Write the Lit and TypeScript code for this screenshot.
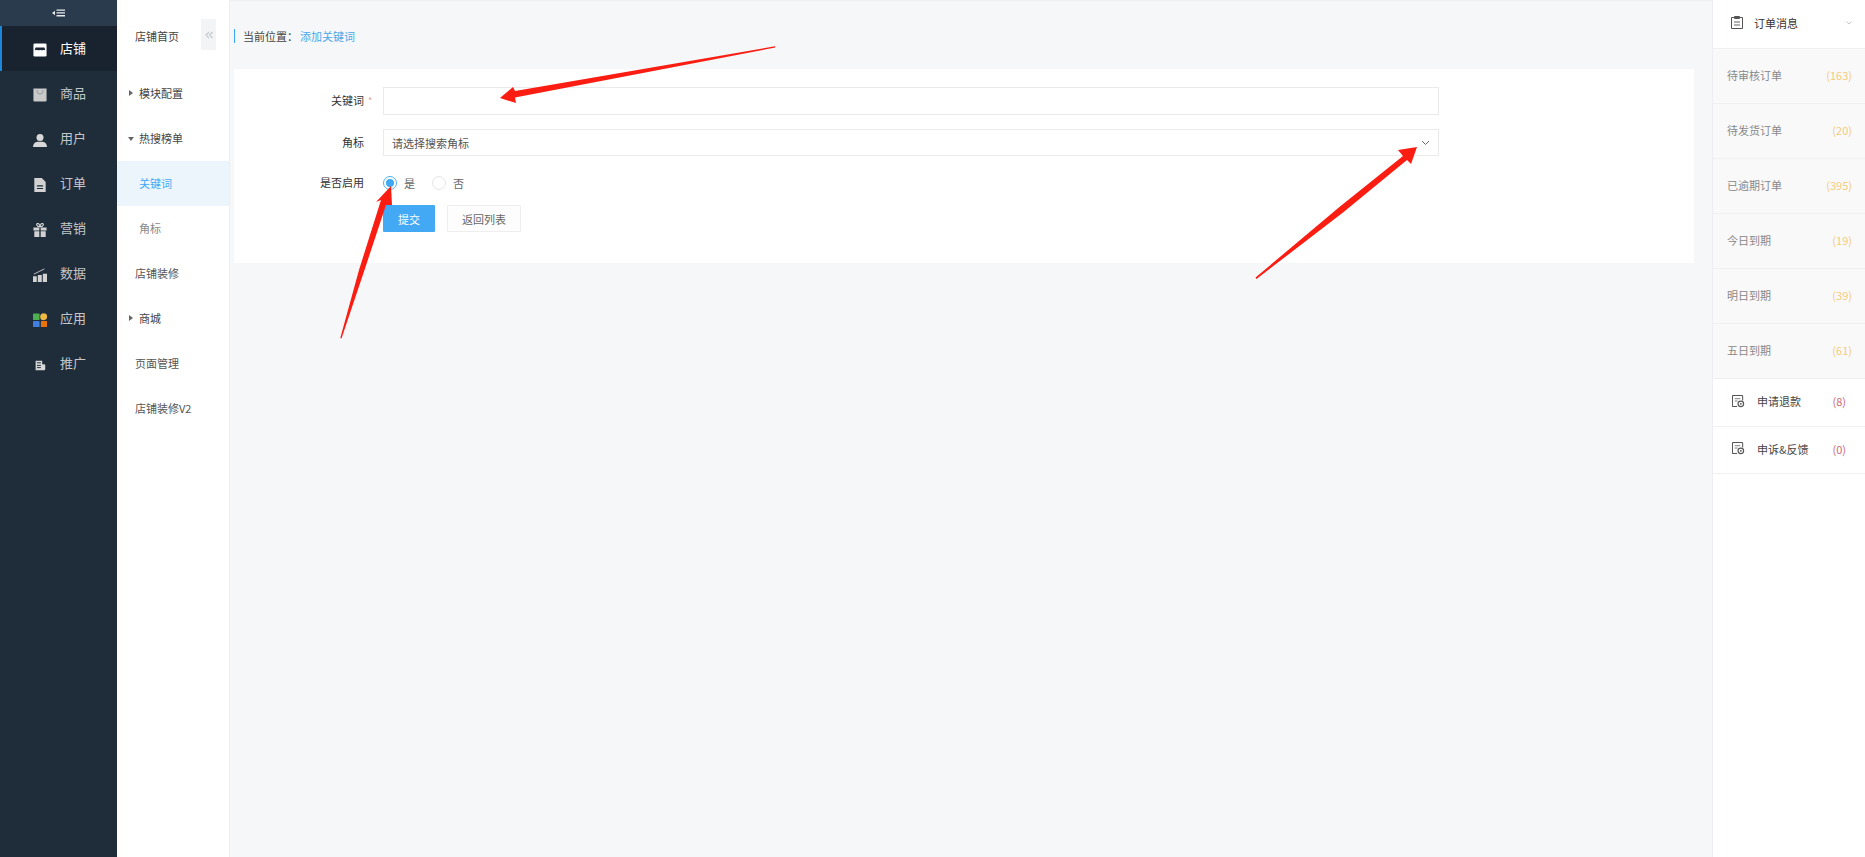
import { LitElement, html, css, svg } from "lit";
import { customElement } from "lit/decorators.js";

const icons: Record<string, unknown> = {
  shop: svg`<path fill="#fff" d="M1.500 3Q1.500 1.500 3 1.500h12Q16.500 1.500 16.500 3V15q0 1.500-1.500 1.500H3Q1.500 16.500 1.500 15z"/><path fill="#1a2433" d="M4 6h10l1 2.500q-1 1.200-2 .2-1.800 1.200-3.800 0-2 1.200-3.600 0-1.600 1-2.600-.2z"/>`,
  goods: svg`<path fill="#c9c9c9" d="M1.500 1.500h15V15q0 1.500-1.500 1.500H3Q1.500 16.500 1.500 15z"/><path fill="none" stroke="#8f9499" stroke-width="1" d="M5.500 3.500q0 4.500 3.500 4.500t3.500-4.500"/>`,
  user: svg`<circle cx="9" cy="6" r="4" fill="#d8d8d8"/><path fill="#d8d8d8" d="M1 17q.5-5.500 5-6h6q4.500.5 5 6z"/>`,
  order: svg`<path fill="#d2d2d2" d="M2.500 1h8.500l4.500 4.500V17h-13z"/><path stroke="#1f2d3b" stroke-width="1.300" d="M5.500 10h7M5.500 13h7"/>`,
  gift: svg`<path fill="#d2d2d2" d="M1.500 6h6.700v3.500H1.500zM9.800 6h6.700v3.500H9.800zM2.500 10.500h5.700V17H2.500zM9.800 10.500h5.700V17H9.800z"/><path fill="none" stroke="#d2d2d2" stroke-width="1.300" d="M9 5.500C5 5 4.500 2 6 1.500S9 3.500 9 5.500C9 3.500 10.500 1 12 1.500S13 5 9 5.500z"/>`,
  data: svg`<path fill="#d2d2d2" d="M1 10.500h4.300v6.500H1zM6.500 9H11v8H6.500zM12.200 7.500H17V17h-4.800z"/><path fill="none" stroke="#d2d2d2" stroke-width="1" d="M2 8 8 5l6-3"/>`,
  app: svg`<rect x="1" y="1.500" width="7.500" height="7.500" rx="1" fill="#4caf50"/><circle cx="13.200" cy="5.200" r="4" fill="#f0b840"/><rect x="1" y="10" width="7.500" height="7.500" rx="1" fill="#3f7fe0"/><rect x="10" y="10" width="7.500" height="7.500" rx="1" fill="#e8730c"/>`,
  promo: svg`<path fill="#d8d8d8" d="M4 4h7.500v4H14l1 1v5l-1 1H4z"/><path stroke="#1f2d3b" stroke-width="1.100" d="M5.500 6.500h4.500M5.500 9.500h4.500M5.500 12h4.500"/>`,
};

const mainNav = [
  ["shop", "店铺", true],
  ["goods", "商品", false],
  ["user", "用户", false],
  ["order", "订单", false],
  ["gift", "营销", false],
  ["data", "数据", false],
  ["app", "应用", false],
  ["promo", "推广", false],
] as const;

const subNav = [
  { t: "模块配置", k: "group", arrow: "tr" },
  { t: "热搜榜单", k: "group", arrow: "td" },
  { t: "关键词", k: "child active" },
  { t: "角标", k: "child" },
  { t: "店铺装修", k: "top" },
  { t: "商城", k: "group", arrow: "tr" },
  { t: "页面管理", k: "top" },
  { t: "店铺装修V2", k: "top" },
];

const orders = [
  ["待审核订单", "(163)"],
  ["待发货订单", "(20)"],
  ["已逾期订单", "(395)"],
  ["今日到期", "(19)"],
  ["明日到期", "(39)"],
  ["五日到期", "(61)"],
];

const docIcon = svg`<svg class="ri" viewBox="0 0 14 14" width="13" height="13"><path fill="none" stroke="#555" stroke-width="1.100" d="M11.500 6V1.500q0-1-1-1h-9q-1 0-1 1v10q0 1 1 1h4"/><path stroke="#777" stroke-width="1" d="M3 4h6M3 6.500h3"/><circle cx="9.500" cy="9.500" r="3" fill="none" stroke="#555" stroke-width="1.300"/><circle cx="9.500" cy="9.500" r="1" fill="#555"/></svg>`;

@customElement("app-root")
export class AppRoot extends LitElement {
  static styles = css`
    :host { display: block; height: 857px; width: 1865px; position: relative; overflow: hidden;
      font-family: "Noto Sans CJK SC", "Liberation Sans", sans-serif; font-size: 11px; color: #333; background: #f5f7f9; }
    .page { display: flex; height: 100%; }
    .side { width: 117px; flex: none; background: #1f2d3b; color: #cfd2d5; }
    .fold { height: 26px; background: #2a3b4d; display: flex; align-items: center; justify-content: center; }
    .nav { height: 45px; display: flex; align-items: center; padding-left: 33px; gap: 13px; font-size: 13px; color: #c4c7ca; }
    .nav.on { background: #19222f; color: #fff; box-shadow: inset 2px 0 0 #1c87d9; }
    .nav svg { width: 14px; height: 14px; flex: none; margin-top: 2px; }
    .nav span { margin-top: -2px; }
    .sub { flex: none; background: #fff; border-right: 1px solid #eceef1; box-sizing: border-box; width: 113px; position: relative; }
    .si { height: 45px; box-sizing: border-box; padding-bottom: 2px; display: flex; align-items: center; color: #555; position: relative; }
    .si.top { padding-left: 18px; }
    .si.group { padding-left: 22px; color: #444; }
    .si.child { padding-left: 22px; color: #888; }
    .si.active { color: #3ea9f5; background: #edf5fc; }
    .si.home { padding: 0 0 0 18px; color: #444; height: 71px; }
    .tri { position: absolute; left: 11px; top: 50%; width: 0; height: 0; }
    .tri.tr { border-left: 4px solid #666; border-top: 3.500px solid transparent; border-bottom: 3.500px solid transparent; margin-left: 1px; margin-top: -4px; }
    .tri.td { border-top: 4px solid #666; border-left: 3.500px solid transparent; border-right: 3.500px solid transparent; margin-top: -2px; }
    .coll { position: absolute; left: 84px; top: 19px; width: 15px; height: 31px; background: #f3f4f6; color: #c3c7cc; display: flex; align-items: center; justify-content: center; }
    .main { flex: 1; min-width: 0; padding: 0 18px 0 4px; display: flex; flex-direction: column; border-top: 1px solid #eff0f2; }
    .crumb { height: 68px; flex: none; display: flex; align-items: center; color: #444; }
    .crumb .in { display: flex; align-items: center; height: 14px; border-left: 1px solid #3ea9f5; padding-left: 8px; margin-top: 2px; }
    .crumb a { color: #4ba6ea; margin-left: 2px; }
    .card { background: #fff; height: 194px; flex: none; box-sizing: border-box; padding-top: 18px; }
    .row { display: flex; align-items: center; }
    .lab { width: 130px; flex: none; text-align: right; color: #333; box-sizing: border-box; position: relative; padding-bottom: 2px; }
    .field { width: 1056px; margin-left: 19px; height: 28px; border: 1px solid #eaeaec; box-sizing: border-box; display: flex; align-items: center; justify-content: space-between; padding: 0 8px 0 8px; color: #555; }
    .field.sel { height: 27px; }
    .star { position: absolute; left: 134px; top: 2px; color: #e59a9a; font-size: 9px; }
    .r2 { margin-top: 14px; }
    .r3 { margin-top: 13px; height: 28px; }
    .radio { width: 14px; height: 14px; border-radius: 50%; border: 1px solid #e3e5e8; box-sizing: border-box; flex: none; }
    .radio.on { border-color: #4fb0f6; position: relative; }
    .radio.on::after { content: ""; position: absolute; inset: 2px; border-radius: 50%; background: #3ea9f5; }
    .radios { margin-left: 19px; display: flex; align-items: center; color: #666; }
    .radios span { margin-left: 7px; margin-right: 17px; }
    .btns { display: flex; gap: 12px; margin: 8px 0 0 149px; }
    .btn { height: 27px; box-sizing: border-box; display: flex; align-items: center; justify-content: center; border-radius: 1px; }
    .btn.pri { width: 52px; background: #43a9f5; color: #fff; }
    .btn.def { width: 74px; border: 1px solid #eeeeee; color: #666; background: #fdfdfd; }
    .panel { width: 153px; flex: none; background: #fff; border-left: 1px solid #eceef1; box-sizing: border-box; }
    .rh { height: 49px; display: flex; align-items: center; padding: 0 0 3px 18px; color: #333; border-bottom: 1px solid #eff0f2; box-sizing: border-box; }
    .rh svg.doc { margin-right: 11px; }
    .rh svg.ch { margin-left: 48px; }
    .ro { height: 55px; box-sizing: border-box; display: flex; align-items: center; justify-content: space-between; padding: 0 13px 2px 14px; background: #f9f9fa; border-bottom: 1px solid #eff0f2; color: #888; }
    .ro b { font-weight: 400; color: #f3cb7a; }
    .rr { height: 48px; box-sizing: border-box; display: flex; align-items: center; padding: 0 0 3px 19px; border-bottom: 1px solid #eff0f2; color: #444; }
    .rr + .rr { height: 47px; }
    .rr .ri { margin-right: 12px; flex: none; }
    .rr b { font-weight: 400; color: #cf6a72; margin-left: auto; margin-right: 19px; }
    .arrows { position: absolute; left: 0; top: 0; pointer-events: none; }
  `;

  render() {
    return html`
      <div class="page">
        <aside class="side">
          <div class="fold">
            <svg width="13" height="8" viewBox="0 0 13 8"><path fill="#e6e9ec" d="M0 4 3 1.800v4.400zM4.500 .5H13v1.300H4.500zM4.500 3.300H13v1.300H4.500zM4.500 6.100H13v1.300H4.500z"/></svg>
          </div>
          ${mainNav.map(([i, t, on]) => html`
            <div class="nav ${on ? "on" : ""}"><svg viewBox="1 1 16 16">${icons[i]}</svg><span>${t}</span></div>`)}
        </aside>
        <nav class="sub">
          <div class="si home">店铺首页</div>
          <div class="coll"><svg width="8" height="8" viewBox="0 0 8 8"><path fill="none" stroke="currentColor" stroke-width="1.100" d="M4 1 1 4l3 3M7.500 1l-3 3 3 3"/></svg></div>
          ${subNav.map(s => html`
            <div class="si ${s.k}">${s.arrow ? html`<i class="tri ${s.arrow}"></i>` : ""}${s.t}</div>`)}
        </nav>
        <main class="main">
          <div class="crumb"><div class="in">当前位置：<a>添加关键词</a></div></div>
          <section class="card">
            <div class="row"><div class="lab">关键词<span class="star">*</span></div><div class="field"></div></div>
            <div class="row r2"><div class="lab">角标</div><div class="field sel"><span>请选择搜索角标</span>
              <svg width="9" height="6" viewBox="0 0 9 6"><path fill="none" stroke="#666" d="M1 1l3.500 3.500L8 1"/></svg></div></div>
            <div class="row r3"><div class="lab">是否启用</div><div class="radios"><i class="radio on"></i><span>是</span><i class="radio"></i><span>否</span></div></div>
            <div class="btns"><div class="btn pri">提交</div><div class="btn def">返回列表</div></div>
          </section>
        </main>
        <aside class="panel">
          <div class="rh">
            <svg class="doc" width="12" height="13" viewBox="0 0 12 13"><path fill="none" stroke="#555" d="M.5 1.500h11v11H.5zM3.500 .5h5v2h-5z"/><path stroke="#666" d="M3 6h6M3 9h6"/></svg>
            <span>订单消息</span>
            <svg class="ch" width="6" height="4" viewBox="0 0 6 4"><path fill="none" stroke="#bbb" stroke-width=".8" d="M.5 .5 3 3 5.500 .5"/></svg>
          </div>
          ${orders.map(([a, b]) => html`<div class="ro"><span>${a}</span><b>${b}</b></div>`)}
          <div class="rr">${docIcon}<span>申请退款</span><b>(8)</b></div>
          <div class="rr">${docIcon}<span>申诉&反馈</span><b>(0)</b></div>
        </aside>
      </div>
      <svg class="arrows" width="1865" height="857" viewBox="0 0 1865 857">
        <path fill="#fb1d12" d="M775 46.300 775.300 47.500 515 97.500 516 103 500 98 513 87 515 91z"/>
        <path fill="#fb1d12" d="M340.300 338 341.500 338.500 364.500 270 386 205 392 205 391 186 376 202 381 200 359 270z"/>
        <path fill="#fb1d12" d="M1255.500 277.500 1256.500 279 1343 212.500 1407 160 1411 164 1417 147 1398 150 1403 156 1340 206.500z"/>
      </svg>
    `;
  }
}
